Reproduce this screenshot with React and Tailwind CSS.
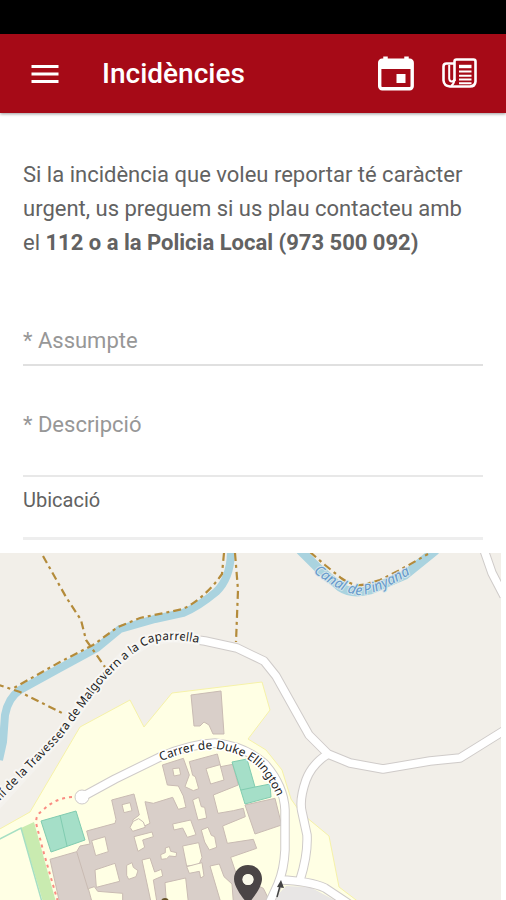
import { MdMenu } from 'react-icons/md'

function CalendarIcon() {
  return (
    <svg viewBox="0 0 36 36" className="size-9" fill="none" aria-hidden="true">
      <rect x="1.7" y="4.2" width="32.5" height="28.600" rx="2.500" stroke="#fff" strokeWidth="3.400" />
      <path d="M1.500 5h33v8h-33z" fill="#fff" />
      <path d="M7.500 .500v5M28.500 .500v5" stroke="#fff" strokeWidth="4.500" />
      <path d="M18.500 18h9v9h-9z" fill="#fff" />
    </svg>
  )
}

function NewsIcon() {
  return (
    <svg viewBox="0 0 36 36" className="size-9" fill="none" stroke="#fff" strokeWidth="2.600" aria-hidden="true">
      <path d="M12.500 25V5.500q0-2 2-2H31.500q2 0 2 2V25.500q-.5 5-5.500 5H8q-6-.5-6.500-6V10.500q0-3 3-3h8" />
      <path d="M7.200 9v13.500q.3 3 2.500 3t2.800-2.500M12.500 24q-.5 4-3.500 6" strokeWidth="2" />
      <path d="M17 10.500h12.500" strokeWidth="3.400" />
      <path d="M17 15.500h12.500M17 19.700h12.500M17 23.600h12.500M17 27.300h12.500" strokeWidth="2" />
    </svg>
  )
}

const roads = [
  'M-5 806L60 735L95 686L125 655L150 640L175 637L205 641L237 648L264 661L276 676L295 710L309 735L328 754L350 763L383 769L430 761L460 758L505 730',
  'M484 550L492 573L504 596',
  'M328 754Q312 764 306 780Q299 800 302 812L307 835Q308 855 300 880',
  'M280 880Q310 881 325 888L352 906',
  'M82 797L115 779L160 757Q190 744 215 743Q245 746 265 764Q284 786 285 810V850Q284 870 278 884L268 906',
]

const footpaths = [
  'M224 553L222 574Q205 598 183 609L140 618L118 627L93 645L60 662L12 689',
  'M43 556L66 597L81 620L86 640L105 667',
  'M235 553L238 590L236 642',
  'M-4 684L20 692L64 714',
  'M310 552L325 565L341 578Q355 588 366 584L380 580L400 570L428 554',
]

// courtyards inside the building block
const courtyards = [
  'M128 146l20-2 4 20-20 4z',
  'M228 146l42-12 12 46-40 12z',
  'M-24 254l24-6 6 24-24 6z',
  'M188 240l18-8 8 28 10 2 6 32-26 6z',
  'M128 312l54-12 16 44-26 8-14-28-26 6z',
  'M214 330l20-8 10 24 10 4 6 32-22 8-14-24z',
  'M158 378l48-10 10 44-10 24-36 2z',
  'M92 404l14-6 0-14 12-4 4 14 18 4-2 12-20-2-8 8-16 2z',
  'M12 350l54-14 4 14-32 10 6 22-20 12z',
  'M36 420l24-6 14 42 20-8 4 20-28 12 10 62H62z',
  'M105 488l62-14 8 72h-66z',
  'M170 440l46-12 6 40-10 6-4-20-30 6z',
  'M240 438l28-6 14 38 24 22 4 54h-38z',
  'M-115 362l40-12 10 45-38 12z',
  'M-105 450l60-20 14 54-70 18z',
  'M-10 436l16-8 4 14 14 10-6 18-22 8-6-12z',
  'M-125 506l18-6 10 14 75 6v26h-92z',
  'M10 304l16-8 14 10 6 16-38 12-8-12z',
]

function LocationMap() {
  return (
    <svg
      viewBox="0 553 501 347"
      className="block h-auto w-full bg-[#f2efe9]"
      role="img"
      aria-label="Mapa de la ubicació"
    >
      <defs>
        <path id="travessera" d="M-3 804L62 737L97 689Q125 656 150 643Q172 635 220 648" />
        <path id="duke" d="M161 761Q190 749 217 749Q244 753 259 768Q273 784 284 812" />
        <path id="canal" d="M313 572Q345 596 362 595Q385 592 432 560" />
      </defs>

      <path
        d="M-2 830L30 812L80 727L130 700L144 727L172 693L262 682L270 710L248 739L266 750L282 770L291 799L300 812L329 836L339 887L360 903H-2z"
        fill="#ffffe4"
        stroke="#f6f2a8"
      />
      <path d="M270 903L286 886L310 887L340 903z" fill="#e8e6e5" />

      <path d="M21 828L34 822L56 902H43z" fill="#c9ebb0" />
      <path d="M-2 840L21 828L42 902" fill="none" stroke="#a5dfc3" strokeWidth="1.500" />

      <path
        d="M231 550Q231 578 216 592Q198 607 183 613L155 619L120 629L97 648L60 668L20 690Q8 698 5 715L3 742L-1 760"
        fill="none"
        stroke="#aad3df"
        strokeWidth="8"
      />
      <path d="M300 550L318 568L340 587Q352 595 370 590L405 575L436 550" fill="none" stroke="#aad3df" strokeWidth="9" />
      {footpaths.map((d) => (
        <path key={d} d={d} fill="none" stroke="#b48b3a" strokeWidth="2.200" strokeDasharray="8 4 3 4" />
      ))}

      <g fill="#d9cfc9" stroke="#c9bbb3">
        <path d="M191 695L221 691L224 734L213 734L209 725L204 722L200 726H194z" />
        <g transform="translate(130 720) scale(.3333)" strokeWidth="3">
          <path d="M-130 333L-45 310L-42 298L-55 240L12 222L28 285L8 300L20 330L60 310L45 245L70 250L128 232L145 268L168 262L160 228L145 198L112 195L97 135L160 115L178 165L165 200L190 212L206 206L196 170L188 166L178 125L262 102L272 140L308 133L325 195L250 225L264 280L310 272L340 265L346 290L278 318L292 370L370 358L380 385L302 412L320 465L400 505L420 545H-212L-240 418L-160 395L-150 378L-120 372z" />
          <path d="M345 255L435 235L455 315L375 342z" />
          <path d="M-160 395L-125 510" fill="none" />
          <g fill="#ffffe4">
            {courtyards.map((d) => (
              <path key={d} d={d} />
            ))}
          </g>
        </g>
      </g>

      <g fill="#a5dfc8" stroke="#80ccb0">
        <path d="M41 821L76 811L85 840L51 852z" />
        <path d="M60 815L67 846" />
        <path d="M232 762L247 759L255 787L270 784L271 797L245 804z" />
        <path d="M241 790L255 787" />
      </g>

      <path
        d="M72 797Q55 798 42 811Q34 816 37 827L43 850L51 878L58 902"
        fill="none"
        stroke="#fa8c82"
        strokeWidth="2"
        strokeDasharray="3 4"
      />

      <g fill="none" strokeLinejoin="round">
        {roads.map((d) => (
          <path key={d} d={d} stroke="#cfcbc9" strokeWidth="9.500" />
        ))}
        <circle cx="82" cy="797" r="7" fill="#fff" stroke="#cfcbc9" />
        {roads.map((d) => (
          <path key={d} d={d} stroke="#fff" strokeWidth="7.500" />
        ))}
        {/* the lane under the street name has no casing */}
        <path
          d="M-5 806L60 735L95 686L125 655L150 640L175 637L200 640"
          stroke="#f4f2ee"
          strokeWidth="11"
        />
      </g>

      <g className="font-['Noto_Sans',sans-serif]" paintOrder="stroke" strokeLinejoin="round">
        <text className="text-[12px]" fill="#222" stroke="#f8f7f4" strokeWidth="4">
          <textPath href="#travessera">mí de la Travessera de Malgovern a la Caparrella</textPath>
        </text>
        <text className="text-[12px]" fill="#222" stroke="#fff" strokeWidth="3">
          <textPath href="#duke">Carrer de Duke Ellington</textPath>
        </text>
        <text className="text-[14px]" fill="#6699cc" stroke="#d5e6ea" strokeWidth="2" fontStyle="italic">
          <textPath href="#canal">Canal de Pinyana</textPath>
        </text>
      </g>

      <path d="M277 897L280 886" stroke="#444" strokeWidth="1.500" />
      <path d="M281 880L284 888L277 887z" fill="#444" />
      <circle cx="165" cy="902" r="4" fill="#655226" />
      <path
        fillRule="evenodd"
        d="M248 865c-8 0-14 6-14 14 0 10 14 25 14 25s14-15 14-25c0-8-6-14-14-14zm0 9a5.500 5.500 0 1 1 0 11a5.500 5.500 0 0 1 0-11z"
        fill="#4b4546"
      />
      <circle cx="248" cy="879.500" r="5.500" fill="#fbf9ea" />
    </svg>
  )
}

export default function App() {
  return (
    <div className="bg-white font-[Roboto,sans-serif] text-[#626262]">
      <div className="h-[34px] bg-black" />
      <header className="flex h-[79px] items-center bg-[#a60a17] pr-7 pl-[27px] text-white shadow-[0_1px_3px_rgba(0,0,0,0.4)]">
        <button type="button" aria-label="Menú">
          <MdMenu size={36} />
        </button>
        <h1 className="ml-[39px] flex-1 text-[28px] font-medium">Incidències</h1>
        <div className="flex gap-7">
          <button type="button" aria-label="Agenda">
            <CalendarIcon />
          </button>
          <button type="button" aria-label="Notícies">
            <NewsIcon />
          </button>
        </div>
      </header>

      <main>
        <form className="px-[23px] pt-[45px]">
          <p className="text-[22px] leading-[34px]">
            Si la incidència que voleu reportar té caràcter urgent, us preguem si us plau contacteu amb el{' '}
            <strong className="font-bold">112 o a la Policia Local (973 500 092)</strong>
          </p>
          <input
            type="text"
            aria-label="Assumpte"
            placeholder="* Assumpte"
            className="mt-14 block h-[50px] w-full border-b-2 border-[#e0e0e0] text-[22px] outline-none placeholder:text-[#979797]"
          />
          <textarea
            aria-label="Descripció"
            placeholder="* Descripció"
            className="mt-[42px] block h-[69px] w-full resize-none border-b-2 border-[#e8e8e8] text-[22px] leading-[34px] outline-none placeholder:text-[#979797]"
          />
          <h2 className="h-[63px] border-b-3 border-[#eeeeee] pt-[10px] text-[20px] leading-[26px]">Ubicació</h2>
        </form>
        <div className="mt-[13px] mr-[5px]">
          <LocationMap />
        </div>
      </main>
    </div>
  )
}
